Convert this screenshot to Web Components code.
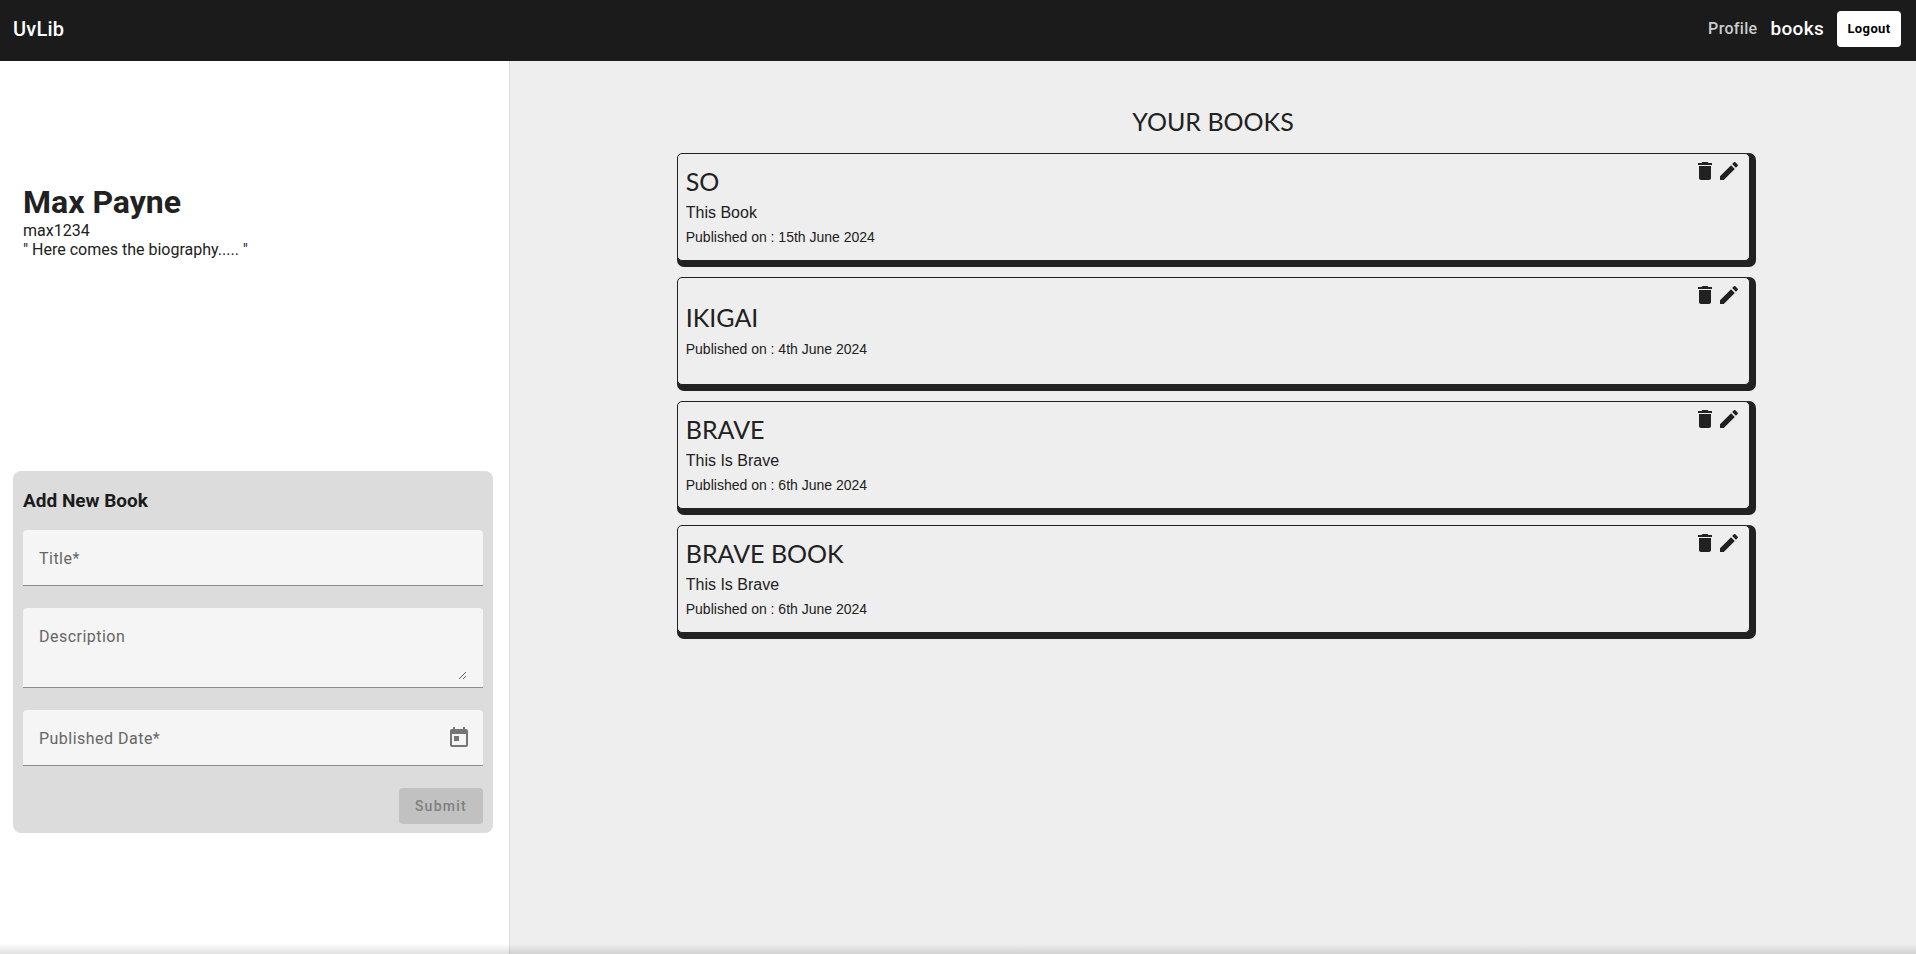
<!DOCTYPE html>
<html lang="en">
<head>
<meta charset="utf-8">
<title>UvLib</title>
<style>
  html, body { height: 100%; }
  body { margin: 0; font: 16px/19px Roboto, sans-serif; color: #212121; background: #fff; }
</style>
</head>
<body>
<uv-app></uv-app>

<script>
const define = (name, html, setup) => customElements.define(name, class extends HTMLElement {
  connectedCallback() {
    if (this.shadowRoot) return;
    const tpl = document.createElement('template');
    tpl.innerHTML = '<style>*{box-sizing:border-box}</style>' + html;
    this.attachShadow({ mode: 'open' }).append(tpl.content.cloneNode(true));
    if (setup) setup(this, this.shadowRoot);
  }
});

define('uv-header', `
<style>
  :host { display: block; background: #1b1b1b; color: #fff; }
  header { display: flex; align-items: center; justify-content: space-between; height: 61px; padding: 0 15px 4px 13px; }
  a { color: inherit; text-decoration: none; }
  .brand { font-size: 20px; line-height: 24px; font-weight: 500; letter-spacing: 0.01em; }
  nav { display: flex; align-items: center; gap: 13px; font-weight: 500; letter-spacing: 0.02em; }
  .profile { color: #ccc; }
  .current { font-size: 19px; line-height: 24px; }
  button { min-width: 64px; height: 36px; padding: 0 8px; border: 0; border-radius: 4px; background: #fff; color: #000; font: 700 13px/20px Roboto, sans-serif; letter-spacing: 0.03em; }
</style>
<header>
  <a class="brand" href="#home">UvLib</a>
  <nav><a class="profile" href="#profile">Profile</a><a class="current" href="#books">books</a><button type="button">Logout</button></nav>
</header>`);

define('uv-profile', `
<style>
  :host { display: block; padding: 0 10px; }
  h1 { margin: 0; font-size: 32px; line-height: 38px; font-weight: 700; }
  p { margin: 0; }
</style>
<h1><slot name="name"></slot></h1>
<p><slot name="user"></slot></p>
<p><slot></slot></p>`);

define('uv-field', `
<style>
  :host { display: block; }
  .box { position: relative; display: flex; min-height: 56px; background: #f5f5f5; border-bottom: 1px solid #8c8c8c; border-radius: 4px 4px 0 0; padding: 0 16px; }
  label { position: absolute; left: 16px; top: 19px; line-height: 20px; color: #666; letter-spacing: 0.03em; pointer-events: none; }
  input, textarea { flex: 1; min-width: 0; border: 0; outline: 0; padding: 0; margin: 0; background: none; font: 16px/24px Roboto, sans-serif; color: inherit; }
  textarea { height: 48px; margin: 24px 0 7px; resize: vertical; }
  button { position: absolute; right: 12px; top: 16px; width: 24px; height: 24px; border: 0; padding: 0; background: none; color: #757575; }
  svg { display: block; width: 24px; height: 24px; fill: currentColor; }
</style>
<div class="box"><label for="f"></label></div>`, (host, root) => {
  const box = root.querySelector('.box');
  root.querySelector('label').textContent = host.getAttribute('label');
  const kind = host.getAttribute('kind');
  const control = document.createElement(kind === 'area' ? 'textarea' : 'input');
  control.id = 'f';
  box.append(control);
  if (kind === 'date') {
    box.insertAdjacentHTML('beforeend', '<button type="button" aria-label="Open calendar"><svg viewBox="0 0 24 24"><path d="M19 3h-1V1h-2v2H8V1H6v2H5c-1.11 0-1.99.9-1.99 2L3 19c0 1.1.89 2 2 2h14c1.1 0 2-.9 2-2V5c0-1.1-.9-2-2-2zm0 16H5V8h14v11zM7 10h5v5H7z"/></svg></button>');
  }
});

define('uv-book-form', `
<style>
  :host { display: block; background: #dcdcdc; border-radius: 8px; padding: 20px 10px 9px; }
  h2 { margin: 0 0 20px; font-size: 19px; line-height: 19px; font-weight: 700; color: #1b1b1b; }
  form { display: grid; gap: 22px; }
  button { justify-self: end; height: 36px; padding: 0 16px; border: 0; border-radius: 4px; background: #c1c1c1; color: #7f7f7f; font: 500 14px/20px Roboto, sans-serif; letter-spacing: 0.09em; }
</style>
<h2>Add New Book</h2>
<form>
  <uv-field label="Title*"></uv-field>
  <uv-field label="Description" kind="area"></uv-field>
  <uv-field label="Published Date*" kind="date"></uv-field>
  <button type="submit" disabled>Submit</button>
</form>`);

define('uv-book', `
<style>
  :host { display: block; }
  article { padding: 0 6px 6px 0; border-radius: 7px; background: #212121; font-family: "Liberation Sans", Arial, sans-serif; }
  .face { display: flex; align-items: center; justify-content: space-between; min-height: 108px; padding: 0 8px; border: 1px solid #212121; border-radius: 5px; background: #eee; }
  h3 { margin: 0 0 12px; font: 400 25px/24px Lato, sans-serif; text-transform: uppercase; }
  p { margin: 0 0 8px; line-height: 16px; }
  .date { margin: 0; font-size: 14px; }
  .actions { display: flex; align-self: flex-start; padding-top: 5px; }
  button { width: 24px; height: 24px; border: 0; padding: 0; background: none; color: inherit; }
  svg { display: block; width: 24px; height: 24px; fill: currentColor; }
</style>
<article><div class="face">
  <div><h3></h3><p class="text"></p><p class="date"></p></div>
  <div class="actions">
    <button type="button" aria-label="Delete"><svg viewBox="0 0 24 24"><path d="M6 19c0 1.1.9 2 2 2h8c1.1 0 2-.9 2-2V7H6v12zM19 4h-3.500l-1-1h-5l-1 1H5v2h14V4z"/></svg></button>
    <button type="button" aria-label="Edit"><svg viewBox="0 0 24 24"><path d="M3 17.250V21h3.750L17.810 9.940l-3.750-3.750L3 17.250zM20.710 7.040c.39-.39.39-1.020 0-1.410l-2.340-2.340c-.39-.39-1.020-.39-1.410 0l-1.830 1.830 3.750 3.750 1.830-1.830z"/></svg></button>
  </div>
</div></article>`, (host, root) => {
  root.querySelector('h3').textContent = host.getAttribute('name');
  root.querySelector('.date').textContent = 'Published on : ' + host.getAttribute('date');
  const text = root.querySelector('.text');
  if (host.hasAttribute('text')) text.textContent = host.getAttribute('text');
  else text.remove();
});

define('uv-app', `
<style>
  :host { display: flex; flex-direction: column; min-height: 100vh; position: relative; }
  .cols { flex: 1; display: grid; grid-template-columns: 510px 1fr; }
  aside { padding: 122px 16px 0 13px; border-right: 1px solid #dcdcdc; }
  uv-book-form { margin-top: 212px; }
  main { background: #eee; padding-top: 46px; }
  h2 { margin: 0 0 18px; font: 400 25px/28px Lato, sans-serif; text-align: center; }
  .list { display: grid; gap: 10px; margin: 0 calc(12.5% - 16px) 0 calc(12.5% - 9px); }
  .shade { position: absolute; inset: auto 0 0 0; height: 10px; background: linear-gradient(#0000, #0000001f); pointer-events: none; }
</style>
<uv-header></uv-header>
<div class="cols">
  <aside>
    <uv-profile><span slot="name">Max Payne</span><span slot="user">max1234</span>" Here comes the biography..... "</uv-profile>
    <uv-book-form></uv-book-form>
  </aside>
  <main>
    <h2>YOUR BOOKS</h2>
    <div class="list">
      <uv-book name="So" text="This Book" date="15th June 2024"></uv-book>
      <uv-book name="Ikigai" date="4th June 2024"></uv-book>
      <uv-book name="Brave" text="This Is Brave" date="6th June 2024"></uv-book>
      <uv-book name="Brave Book" text="This Is Brave" date="6th June 2024"></uv-book>
    </div>
  </main>
</div>
<div class="shade"></div>`);
</script>
</body>
</html>
